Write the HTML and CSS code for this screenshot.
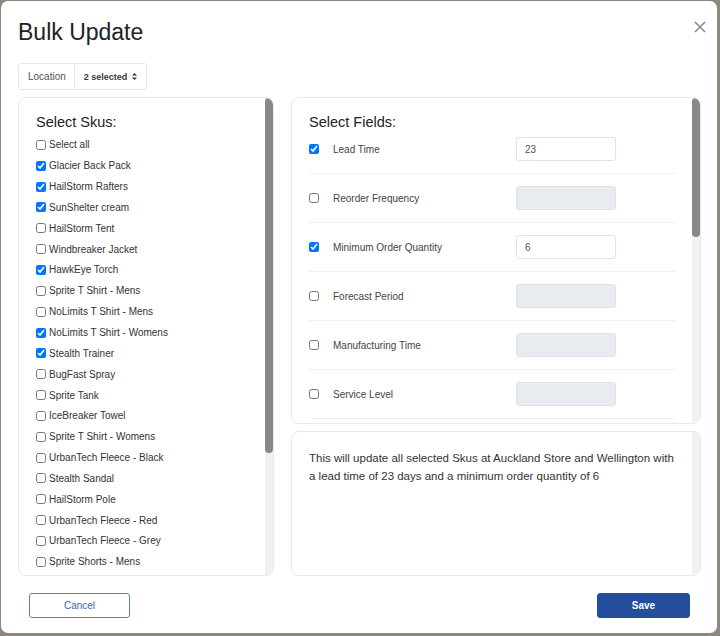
FILE: index.html
```html
<!DOCTYPE html>
<html lang="en">
<head>
<meta charset="utf-8">
<title>Bulk Update</title>
<link rel="stylesheet" href="styles.css">
</head>
<body>
<div class="modal">
  <div class="modal-header">
    <h1 class="title">Bulk Update</h1>
    <button class="close" aria-label="Close">
      <svg width="12" height="12" viewBox="0 0 12 12"><path d="M1 1 L11 11 M11 1 L1 11" stroke="#8a8a8a" stroke-width="1.6" fill="none"/></svg>
    </button>
  </div>

  <div class="loc-group">
    <span class="loc-label">Location</span>
    <span class="loc-select">2 selected
      <svg class="sort" width="5" height="7" viewBox="0 0 5 7"><path d="M2.5 0 L5 2.6 H0 Z M0 4.4 H5 L2.5 7 Z" fill="#333"/></svg>
    </span>
  </div>

  <div class="main">
    <div class="card skus">
      <div class="card-body skus-body">
        <h2 class="card-title">Select Skus:</h2>
        <label class="sku"><input type="checkbox"><span>Select all</span></label>
        <label class="sku"><input type="checkbox" checked><span>Glacier Back Pack</span></label>
        <label class="sku"><input type="checkbox" checked><span>HailStorm Rafters</span></label>
        <label class="sku"><input type="checkbox" checked><span>SunShelter cream</span></label>
        <label class="sku"><input type="checkbox"><span>HailStorm Tent</span></label>
        <label class="sku"><input type="checkbox"><span>Windbreaker Jacket</span></label>
        <label class="sku"><input type="checkbox" checked><span>HawkEye Torch</span></label>
        <label class="sku"><input type="checkbox"><span>Sprite T Shirt - Mens</span></label>
        <label class="sku"><input type="checkbox"><span>NoLimits T Shirt - Mens</span></label>
        <label class="sku"><input type="checkbox" checked><span>NoLimits T Shirt - Womens</span></label>
        <label class="sku"><input type="checkbox" checked><span>Stealth Trainer</span></label>
        <label class="sku"><input type="checkbox"><span>BugFast Spray</span></label>
        <label class="sku"><input type="checkbox"><span>Sprite Tank</span></label>
        <label class="sku"><input type="checkbox"><span>IceBreaker Towel</span></label>
        <label class="sku"><input type="checkbox"><span>Sprite T Shirt - Womens</span></label>
        <label class="sku"><input type="checkbox"><span>UrbanTech Fleece - Black</span></label>
        <label class="sku"><input type="checkbox"><span>Stealth Sandal</span></label>
        <label class="sku"><input type="checkbox"><span>HailStorm Pole</span></label>
        <label class="sku"><input type="checkbox"><span>UrbanTech Fleece - Red</span></label>
        <label class="sku"><input type="checkbox"><span>UrbanTech Fleece - Grey</span></label>
        <label class="sku"><input type="checkbox"><span>Sprite Shorts - Mens</span></label>
      </div>
      <div class="scrollbar"><div class="thumb thumb-skus"></div></div>
    </div>

    <div class="right-col">
      <div class="card fields">
        <div class="card-body fields-body">
          <h2 class="card-title">Select Fields:</h2>
          <div class="field-row"><input type="checkbox" checked><span class="field-label">Lead Time</span><input class="field-input" type="text" value="23"></div>
          <div class="field-row"><input type="checkbox"><span class="field-label">Reorder Frequency</span><input class="field-input" type="text" disabled></div>
          <div class="field-row"><input type="checkbox" checked><span class="field-label">Minimum Order Quantity</span><input class="field-input" type="text" value="6"></div>
          <div class="field-row"><input type="checkbox"><span class="field-label">Forecast Period</span><input class="field-input" type="text" disabled></div>
          <div class="field-row"><input type="checkbox"><span class="field-label">Manufacturing Time</span><input class="field-input" type="text" disabled></div>
          <div class="field-row"><input type="checkbox"><span class="field-label">Service Level</span><input class="field-input" type="text" disabled></div>
        </div>
        <div class="scrollbar"><div class="thumb thumb-fields"></div></div>
      </div>
      <div class="card summary">
        <div class="card-body summary-body">
          <p class="summary-text">This will update all selected Skus at Auckland Store and Wellington with a lead time of 23 days and a minimum order quantity of 6</p>
        </div>
        <div class="scrollbar"></div>
      </div>
    </div>
  </div>

  <div class="modal-footer">
    <button class="btn btn-cancel">Cancel</button>
    <button class="btn btn-save">Save</button>
  </div>
</div>
</body>
</html>
```

FILE: styles.css
```css
* { box-sizing: border-box; }

html, body {
  margin: 0;
  height: 100%;
}

body {
  background: #8c8880;
  font-family: "Liberation Sans", Arial, sans-serif;
  color: #333;
  overflow: hidden;
}

.modal {
  margin: 1px 0 0 1px;
  width: 716px;
  height: 632px;
  background: #fff;
  border-radius: 7px;
  padding: 17px 16px 0 17px;
}

.modal-header {
  display: flex;
  justify-content: space-between;
  align-items: flex-start;
}

.title {
  margin: 0;
  font-size: 23px;
  line-height: 28px;
  font-weight: normal;
  color: #222;
}

.close {
  margin: 3px -5px 0 0;
  padding: 0;
  border: 0;
  background: none;
  width: 12px;
  height: 12px;
  display: flex;
}

.loc-group {
  margin-top: 17px;
  display: inline-flex;
  height: 27px;
  border: 1px solid #e1e7f2;
  border-radius: 3px;
  font-size: 10px;
}

.loc-label {
  display: flex;
  align-items: center;
  padding: 0 8px 0 9px;
  color: #555;
  border-right: 1px solid #e1e7f2;
}

.loc-select {
  display: flex;
  align-items: center;
  gap: 5px;
  padding: 0 9px 0 9px;
  font-size: 9px;
  font-weight: bold;
  color: #3a3a3a;
}

.main {
  margin-top: 7px;
  display: grid;
  grid-template-columns: 256px 410px;
  gap: 17px;
  height: 479px;
}

.card {
  display: flex;
  border: 1px solid #e3e9f5;
  border-radius: 8px;
  background: #fff;
  overflow: hidden;
}

.card-body {
  flex: 1;
  min-width: 0;
  overflow: hidden;
}

.scrollbar {
  flex: 0 0 8px;
  background: #f1f1f1;
}

.thumb {
  background: #888;
  border-radius: 4px;
}

.thumb-skus { height: 355px; }
.thumb-fields { height: 139px; }

.card-title {
  margin: 0;
  font-size: 14.5px;
  line-height: 17px;
  font-weight: normal;
  color: #222;
}

.skus-body {
  padding: 16px 10px 0 17px;
}

.skus .card-title {
  margin-bottom: 3.5px;
}

.sku {
  display: flex;
  align-items: center;
  gap: 3px;
  height: 20.85px;
  font-size: 10px;
  color: #333;
  white-space: nowrap;
}

input[type="checkbox"] {
  margin: 0;
  width: 10px;
  height: 10px;
}

.right-col {
  display: flex;
  flex-direction: column;
  gap: 7px;
  min-height: 0;
}

.fields {
  flex: 0 0 327px;
}

.fields-body {
  padding: 16px 16px 0 17px;
}

.field-row {
  display: grid;
  grid-template-columns: 24px 183px 100px;
  align-items: center;
  padding: 12px 0;
  border-bottom: 1px solid #eef0f4;
}

.card-title + .field-row {
  padding-top: 6px;
}

.field-label {
  font-size: 10px;
  color: #444;
}

.field-input {
  width: 100px;
  height: 24px;
  border: 1px solid #dde3ee;
  border-radius: 3px;
  padding: 0 8px;
  font-family: "Liberation Sans", Arial, sans-serif;
  font-size: 10px;
  color: #555;
  background: #fff;
  outline: none;
}

.field-input:disabled {
  background: #e8ebef;
}

.summary {
  flex: 1;
}

.summary-body {
  padding: 18px 16px 0 17px;
}

.summary-text {
  margin: 0;
  font-size: 11.5px;
  line-height: 17.5px;
  color: #333;
}

.modal-footer {
  margin-top: 17px;
  display: flex;
  justify-content: space-between;
  padding: 0 11px;
}

.btn {
  height: 25px;
  border-radius: 3px;
  font-family: "Liberation Sans", Arial, sans-serif;
  font-size: 10px;
  cursor: pointer;
}

.btn-cancel {
  width: 101px;
  background: #fff;
  border: 1px solid #5b7ec2;
  color: #3b64b3;
}

.btn-save {
  width: 93px;
  background: #224e9c;
  border: 1px solid #224e9c;
  color: #fff;
  font-weight: bold;
}
```
